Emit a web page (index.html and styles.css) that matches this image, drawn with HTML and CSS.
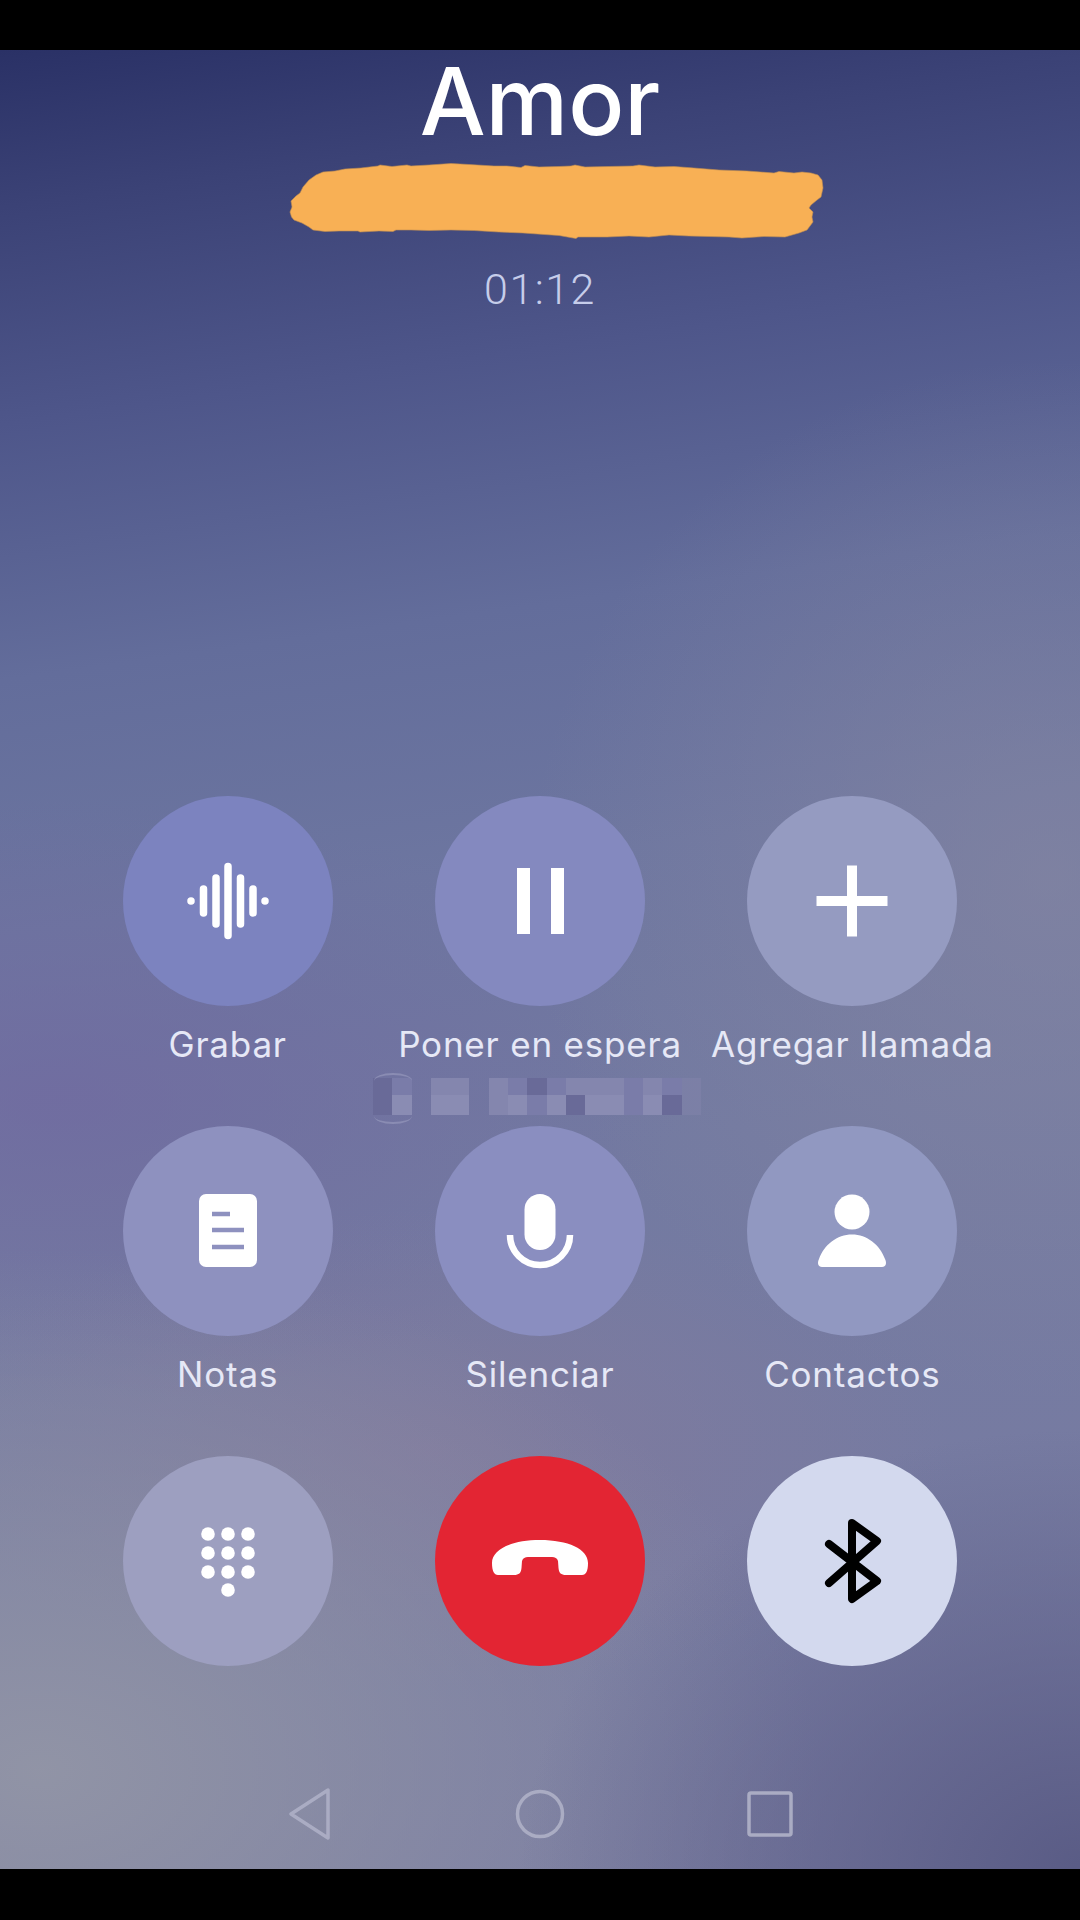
FILE: index.html
```html
<!DOCTYPE html>
<html lang="es">
<head>
<meta charset="utf-8">
<title>Llamada</title>
<link rel="stylesheet" href="styles.css">
</head>
<body>
<div class="screen">
  <div class="blackbar top"></div>
  <main class="call">
    <header class="caller">
      <h1 class="name">Amor</h1>
      <svg class="scribble" viewBox="0 0 540 80" aria-hidden="true"><polygon points="2.500,57 1,52 3,47 2,41 7,36 11,33 14,27 20,20 27,15 34,12 46,11 56,9 72,8 89,6 91,5 103,6.500 118,5 122,6 140,5 162,3.500 180,4.500 205,6 218,6 232,7.500 236,5.500 250,7 270,6.500 282,6 286,5 296,7 320,6.500 344,6 350,5 366,7 385,6.500 405,8 430,10 458,11 485,13 490,11.500 505,13 513,12 522,13 529,15 533,20 534,28 532,37 528,40 522,45 520,48 524,52 523,57 524,62 518,70 510,73 496,77 475,76.500 453,78 440,77 420,76.500 400,76 380,75 360,77 340,76 318,77 289,77 287,78.500 270,75.500 234,73 210,72 185,70.500 162,70 140,70.500 122,70 107,70 104,71.500 90,71 71,72 69,71 50,71 36,71.500 24,70 20,67 13,63 5,60"/></svg>
      <div class="timer">01:12</div>
    </header>
    <section class="controls">
      <div class="control">
        <div class="disc disc-record">
          <svg class="icon" viewBox="0 0 100 100"><g class="wave"><path d="M13 50v.1M25.500 38v24M38 27v46M50 15.500v69M62.500 27v46M75 38v24M87 50v.1"/></g></svg>
        </div>
        <div class="label">Grabar</div>
      </div>
      <div class="control">
        <div class="disc disc-hold">
          <svg class="icon" viewBox="0 0 100 100"><path class="solid" d="M27 17h13v66H27zM61 17h13v66H61z"/></svg>
        </div>
        <div class="label">Poner en espera</div>
      </div>
      <div class="control">
        <div class="disc disc-add">
          <svg class="icon" viewBox="0 0 100 100"><path class="solid" d="M45 14.500h10V45h30.500v10H55v30.500H45V55H14.500V45H45z"/></svg>
        </div>
        <div class="label">Agregar llamada</div>
      </div>
      <div class="control">
        <div class="disc disc-notes">
          <svg class="icon" viewBox="0 0 100 100"><rect class="solid" x="21" y="13" width="58" height="73" rx="7"/><path class="notelines" d="M34 33h18M34 49h32M34 66h32"/></svg>
        </div>
        <div class="label">Notas</div>
      </div>
      <div class="control">
        <div class="disc disc-mute">
          <svg class="icon" viewBox="0 0 100 100"><rect class="solid" x="34.500" y="13" width="31" height="56" rx="15.500"/><path class="micarc" d="M20 54a30 30 0 0 0 60 0"/></svg>
        </div>
        <div class="label">Silenciar</div>
      </div>
      <div class="control">
        <div class="disc disc-contacts">
          <svg class="icon" viewBox="0 0 100 100"><circle class="solid" cx="50" cy="31" r="17.500"/><path class="solid" d="M20 86C16 86 15 82 17 78C22 64 35 53.500 50 53.500S78 64 83 78C85 82 84 86 80 86z"/></svg>
        </div>
        <div class="label">Contactos</div>
      </div>
      <div class="control">
        <div class="disc disc-keypad">
          <svg class="icon" viewBox="0 0 100 100"><g class="solid"><circle cx="30" cy="23" r="6.800"/><circle cx="50" cy="23" r="6.800"/><circle cx="70" cy="23" r="6.800"/><circle cx="30" cy="42" r="6.800"/><circle cx="50" cy="42" r="6.800"/><circle cx="70" cy="42" r="6.800"/><circle cx="30" cy="61" r="6.800"/><circle cx="50" cy="61" r="6.800"/><circle cx="70" cy="61" r="6.800"/><circle cx="50" cy="79" r="6.800"/></g></svg>
        </div>
      </div>
      <div class="control">
        <div class="disc disc-end">
          <svg class="icon" viewBox="0 0 100 100"><path class="solid" d="M2 52C2 38 22 29 50 29S98 38 98 52C98 60 96 64 92 64H76C71 64 69 62 68.500 57L68 50C67 47 65 46 62 46H38C35 46 33 47 32 50L31.500 57C31 62 29 64 24 64H8C4 64 2 60 2 52z"/></svg>
        </div>
      </div>
      <div class="control">
        <div class="disc disc-bluetooth">
          <svg class="icon" viewBox="0 0 100 100"><path class="btglyph" d="M27 33L75 70 50 88V12L75 30 27 72"/></svg>
        </div>
      </div>
    </section>
    <nav class="navbar">
      <svg class="navicon" viewBox="0 0 52 52"><path d="M44 2V50L7 26z"/></svg>
      <svg class="navicon" viewBox="0 0 52 52"><circle cx="26" cy="26" r="22.500"/></svg>
      <svg class="navicon" viewBox="0 0 52 52"><rect x="5" y="5" width="42" height="42" rx="2"/></svg>
    </nav>
    <div class="mosaic" aria-hidden="true">
      <i class="m-d"></i><i class="m-f"></i><i></i><i class="m-l"></i><i class="m-l"></i><i></i><i class="m-l"></i><i class="m-f"></i><i class="m-d"></i><i class="m-f"></i><i class="m-l"></i><i class="m-l"></i><i class="m-l"></i><i class="m-f"></i><i class="m-l"></i><i class="m-f"></i><i class="m-x"></i>
      <i class="m-d"></i><i class="m-h"></i><i></i><i class="m-h"></i><i class="m-h"></i><i></i><i class="m-l"></i><i class="m-h"></i><i class="m-f"></i><i class="m-h"></i><i class="m-d"></i><i class="m-h"></i><i class="m-h"></i><i class="m-f"></i><i class="m-h"></i><i class="m-d"></i><i class="m-x"></i>
    </div>
  </main>
  <div class="blackbar bottom"></div>
</div>
</body>
</html>
```
FILE: styles.css
```css
* { box-sizing: border-box; }
html, body { margin: 0; padding: 0; background: #000; }
.screen {
  width: 1080px;
  height: 1920px;
  display: flex;
  flex-direction: column;
  overflow: hidden;
}
.blackbar { background: #000; flex: none; }
.blackbar.top { height: 50px; }
.blackbar.bottom { height: 51px; }
.call {
  position: relative;
  flex: 1;
  display: flex;
  flex-direction: column;
  background:
    radial-gradient(ellipse 520px 520px at 1050px 830px, rgba(136,136,162,.6), rgba(136,136,162,0)),
    radial-gradient(ellipse 560px 440px at 1080px 1819px, rgba(88,90,132,.95), rgba(88,90,132,0)),
    radial-gradient(ellipse 780px 520px at 40px 1720px, rgba(146,149,166,.95), rgba(146,149,166,0)),
    radial-gradient(ellipse 520px 240px at 430px 1400px, rgba(134,122,156,.6), rgba(134,122,156,0)),
    radial-gradient(ellipse 620px 300px at 60px 1050px, rgba(112,104,160,.7), rgba(112,104,160,0)),
    linear-gradient(172deg, #2a3166 0%, #3b4276 8%, #4e568a 19%, #636d9b 32%, #6d76a0 45%, #737aa1 60%, #7a7ca2 100%);
}
.caller {
  display: flex;
  flex-direction: column;
  align-items: center;
}
.name {
  margin: 3px 0 0;
  font: 500 93px/96px Inter, "Liberation Sans", sans-serif;
  color: #fff;
}
.scribble {
  display: block;
  width: 540px;
  height: 80px;
  margin: 11px 0 0 38px;
  fill: #f8b055;
  stroke: #c08d50;
  stroke-width: .6;
}
.timer {
  margin-top: 23px;
  font: 300 43px/52px Roboto, sans-serif;
  letter-spacing: 1.500px;
  color: #c6cdea;
}
.controls {
  width: 937px;
  margin: auto auto 0;
  display: grid;
  grid-template-columns: repeat(3, 1fr);
  grid-auto-rows: 330px;
}
.control {
  display: flex;
  flex-direction: column;
  align-items: center;
}
.disc {
  width: 210px;
  height: 210px;
  border-radius: 50%;
  display: flex;
  align-items: center;
  justify-content: center;
  flex: none;
}
.disc-record { background: #7c83bf; }
.disc-hold { background: #8489bf; }
.disc-add { background: #959bc1; }
.disc-notes { background: #8e91bf; }
.disc-mute { background: #8a8ec0; }
.disc-contacts { background: #9198c1; }
.disc-keypad { background: #9d9fc0; }
.disc-end { background: #e32533; }
.disc-bluetooth { background: #d3d9ee; }
.icon { width: 100px; height: 100px; display: block; }
.solid { fill: #fff; }
.wave path { fill: none; stroke: #fff; stroke-width: 7.500; stroke-linecap: round; }
.notelines { fill: none; stroke: #8e91bf; stroke-width: 4.500; }
.micarc { fill: none; stroke: #fff; stroke-width: 6.500; }
.btglyph { fill: none; stroke: #000; stroke-width: 8; stroke-linejoin: round; stroke-linecap: round; }
.label {
  margin-top: 17px;
  font: 400 35px/42px Inter, sans-serif;
  letter-spacing: .8px;
  color: #e6e8f6;
  white-space: nowrap;
}
.navbar {
  flex: none;
  height: 111px;
  margin-top: -28px;
  display: flex;
  justify-content: center;
  align-items: center;
  gap: 178px;
}
.navicon {
  width: 52px;
  height: 52px;
  fill: none;
  stroke: #aaacc3;
  stroke-width: 3.500;
  stroke-linejoin: round;
}
.mosaic {
  position: absolute;
  left: 373px;
  top: 1028px;
  display: grid;
  grid-template-columns: repeat(17, 19.300px);
  grid-template-rows: 17px 20px;
}
.mosaic::before {
  content: "";
  position: absolute;
  left: 1px;
  top: -5px;
  width: 38px;
  height: 47px;
  border-radius: 19px / 8px;
  border-top: 2px solid #8a8cb3;
  border-bottom: 2px solid #8a8cb3;
}
.m-h { background: #8a8cb3; }
.m-l { background: #8486ae; }
.m-f { background: #7a7ca9; }
.m-d { background: #696a98; }
.m-x { background: rgba(130,132,172,.55); }
```
